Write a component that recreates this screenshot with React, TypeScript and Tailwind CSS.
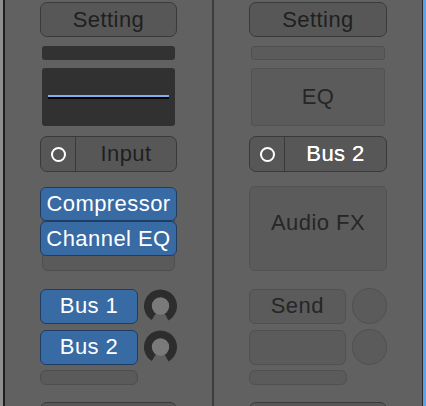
import React from "react";

const font = { fontFamily: '"Liberation Sans", Arial, sans-serif' };

function Knob() {
  return (
    <svg width="36" height="36" viewBox="0 0 36 36">
      <circle
        cx="18"
        cy="18"
        r="13.5"
        fill="none"
        stroke="#2d2d2d"
        strokeWidth="9"
        strokeDasharray="70 100"
        transform="rotate(122 18 18)"
      />
      <circle cx="18" cy="18" r="9.5" fill="#7a7a7a" />
    </svg>
  );
}

function SettingButton() {
  return (
    <div className="mt-[2px] flex h-[35px] items-center justify-center rounded-[7px] border border-[#3a3a3a] bg-[#575757] text-[22px] tracking-[0.02em] text-[#1f1f1f]">
      Setting
    </div>
  );
}

function IoButton({ label, bright }: { label: string; bright?: boolean }) {
  return (
    <div className="mt-[10px] flex h-[36px] overflow-hidden rounded-[7px] border border-[#3a3a3a] bg-[#575757]">
      <div className="flex w-[35px] shrink-0 items-center justify-center border-r border-[#3a3a3a]">
        <div className="h-[15px] w-[15px] rounded-full border-2 border-white" />
      </div>
      <div
        className={
          bright
            ? "flex flex-1 items-center justify-center text-[22px] tracking-[0.02em] text-white [text-shadow:0_0_0.6px_#ffffff]"
            : "flex flex-1 items-center justify-center text-[22px] tracking-[0.02em] text-[#1f1f1f]"
        }
      >
        {label}
      </div>
    </div>
  );
}

function BlueButton({ label, className }: { label: string; className?: string }) {
  return (
    <div
      className={
        "flex shrink-0 items-center justify-center rounded-[6px] border border-[#1f3d63] bg-[#386aa4] text-[22px] tracking-[0.02em] text-white " +
        (className ?? "")
      }
    >
      {label}
    </div>
  );
}

function LeftStrip() {
  return (
    <div className="flex w-[207px] shrink-0 items-start justify-center bg-[#616161]">
      <div className="flex w-[137px] flex-col">
        <SettingButton />
        <div className="mx-[2px] mt-[9px] h-[14px] rounded-[3px] bg-[#323232]" />
        <div className="mx-[2px] mt-[8px] flex h-[58px] flex-col justify-center rounded-[3px] bg-[#313131] px-[6px]">
          <div className="mt-[-1px] h-[2px] bg-[#7cb0f0]" />
          <div className="h-[2px] bg-black" />
        </div>
        <IoButton label="Input" />
        <div className="relative mt-[15px] h-[84px]">
          <div className="absolute inset-x-[2px] inset-y-0 rounded-[6px] border border-[#4e4e4e] bg-[#5a5a5a]" />
          <div className="relative flex flex-col">
            <BlueButton label="Compressor" className="h-[34px]" />
            <BlueButton label="Channel EQ" className="h-[35px]" />
          </div>
        </div>
        <div className="mt-[17px] flex flex-col gap-[5px]">
          <div className="flex items-center gap-[6px]">
            <BlueButton label="Bus 1" className="h-[35px] w-[98px]" />
            <Knob />
          </div>
          <div className="flex items-center gap-[6px]">
            <BlueButton label="Bus 2" className="h-[35px] w-[98px]" />
            <Knob />
          </div>
          <div className="h-[15px] w-[98px] rounded-[6px] border border-[#4e4e4e] bg-[#5a5a5a]" />
        </div>
        <div className="mt-[17px] h-[30px] rounded-[7px] border border-[#3a3a3a] bg-[#575757]" />
      </div>
    </div>
  );
}

function RightStrip() {
  return (
    <div className="flex w-[208px] shrink-0 items-start justify-center bg-[#616161]">
      <div className="flex w-[138px] flex-col">
        <SettingButton />
        <div className="mx-[2px] mt-[9px] h-[14px] rounded-[3px] border border-[#505050] bg-[#5b5b5b]" />
        <div className="mx-[2px] mt-[8px] flex h-[58px] items-center justify-center rounded-[3px] border border-[#525252] bg-[#5b5b5b] text-[22px] tracking-[0.02em] text-[#262626]">
          EQ
        </div>
        <IoButton label="Bus 2" bright />
        <div className="mt-[14px] flex h-[85px] items-center justify-center rounded-[6px] border border-[#525252] bg-[#5b5b5b] pb-[12px] text-[22px] tracking-[0.02em] text-[#262626]">
          Audio FX
        </div>
        <div className="mt-[17px] flex flex-col gap-[5px]">
          <div className="flex items-center gap-[6px]">
            <div className="flex h-[35px] w-[98px] items-center justify-center rounded-[6px] border border-[#505050] bg-[#5b5b5b] text-[22px] tracking-[0.02em] text-[#262626]">
              Send
            </div>
            <div className="h-[36px] w-[36px] rounded-full border border-[#505050] bg-[#5b5b5b]" />
          </div>
          <div className="flex items-center gap-[6px]">
            <div className="h-[35px] w-[98px] rounded-[6px] border border-[#505050] bg-[#5b5b5b]" />
            <div className="h-[36px] w-[36px] rounded-full border border-[#505050] bg-[#5b5b5b]" />
          </div>
          <div className="h-[15px] w-[98px] rounded-[6px] border border-[#505050] bg-[#5b5b5b]" />
        </div>
        <div className="mt-[17px] h-[30px] rounded-[7px] border border-[#3a3a3a] bg-[#575757]" />
      </div>
    </div>
  );
}

export default function App() {
  return (
    <div className="flex h-[406px] w-[426px] overflow-hidden bg-[#616161] leading-none" style={font}>
      <div className="w-[3px] shrink-0 bg-[#8e8e8e]" />
      <div className="w-[2px] shrink-0 bg-[#1e1e1e]" />
      <LeftStrip />
      <div className="w-[2px] shrink-0 bg-[#3c3c3c]" />
      <RightStrip />
      <div className="w-[1px] shrink-0 bg-[#2a2a2a]" />
      <div className="w-[3px] shrink-0 bg-[#5ea2ea]" />
    </div>
  );
}
